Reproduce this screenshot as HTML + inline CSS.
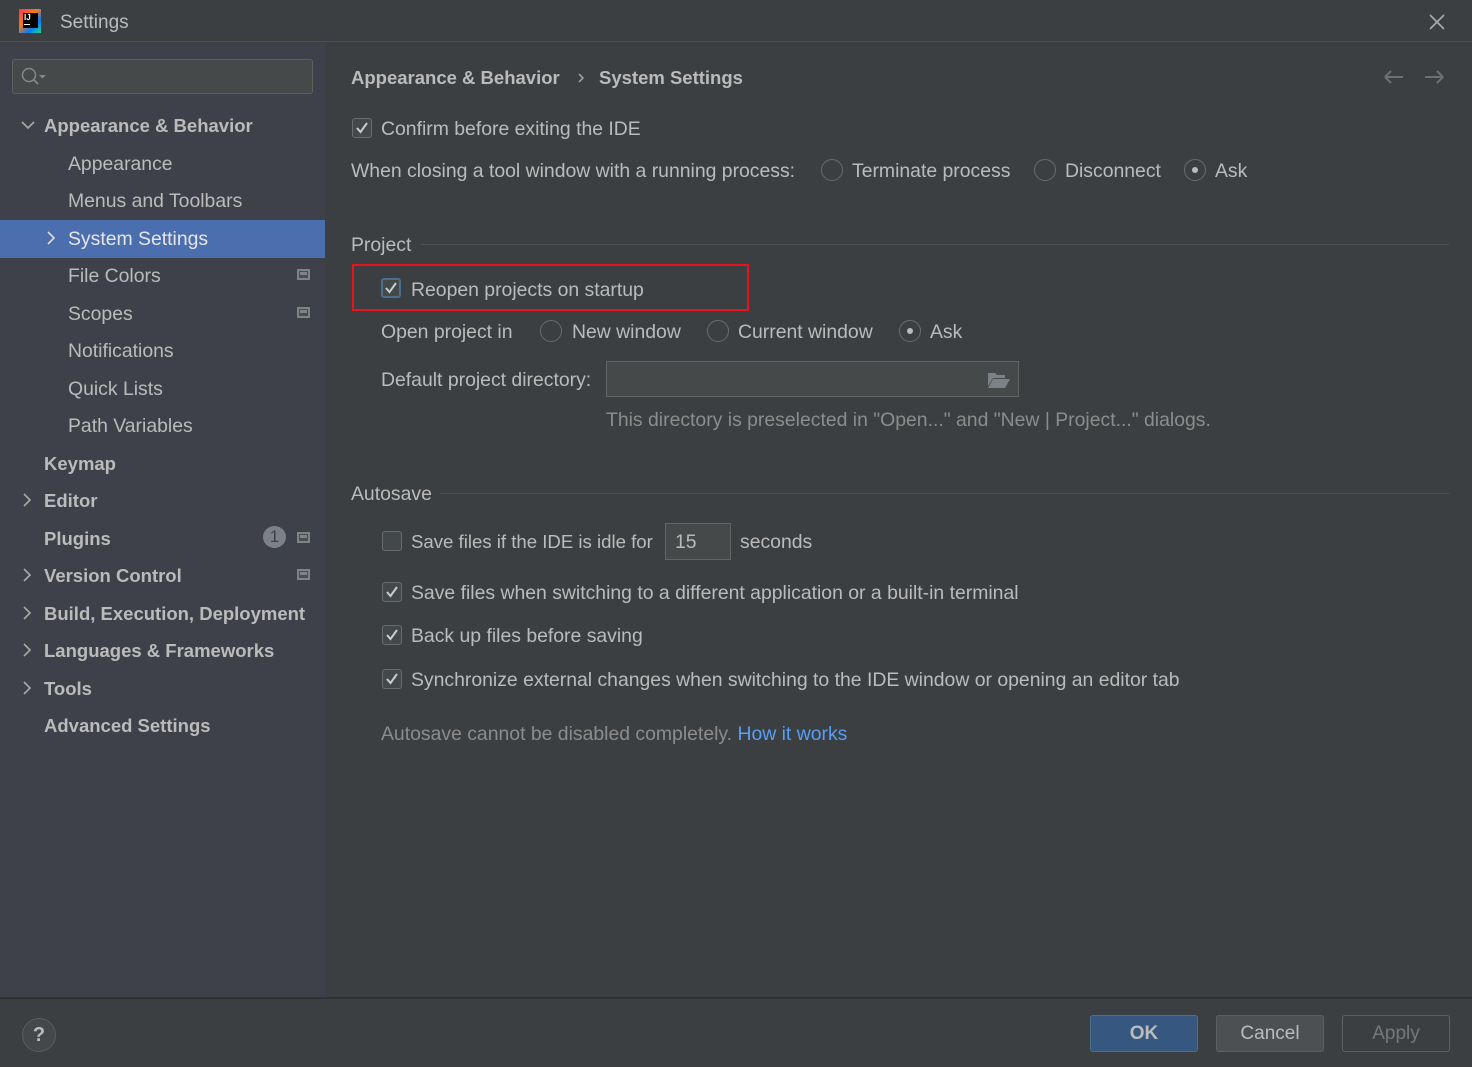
<!DOCTYPE html>
<html><head><meta charset="utf-8"><style>
*{margin:0;padding:0;box-sizing:border-box}
body{width:1472px;height:1067px;background:#3c3f41;font-family:"Liberation Sans","Noto Sans CJK SC",sans-serif;color:#bbbbbb;font-size:19.4px;position:relative;overflow:hidden}
.a{position:absolute;white-space:nowrap;line-height:22px;margin-top:1px}
.b{font-weight:bold;font-size:18.5px}
.cb{position:absolute;width:20px;height:20px;border:1px solid #6b6b6b;background:#43494a;border-radius:3px}
.cb svg{position:absolute;left:2px;top:2px}
.rb{position:absolute;width:22px;height:22px;border:1px solid #6b6b6b;background:#3c3f41;border-radius:50%}
.rb.on::after{content:"";position:absolute;left:7px;top:7px;width:6px;height:6px;border-radius:50%;background:#bbb}
.ico{position:absolute;width:13px;height:11px;border:2px solid #7d8387;background:#4a4e52}
.ico::after{content:"";position:absolute;left:1px;top:1px;width:7px;height:3px;background:#7d8387}
.line{position:absolute;height:1px;background:#515151}
.btn{position:absolute;top:1015px;width:108px;height:37px;border-radius:3px;text-align:center;line-height:35px;font-size:19px}
</style></head><body>
<div style="position:absolute;left:0;top:0;width:1472px;height:42px;background:#3c3f41;border-bottom:1px solid #4e5052"></div>
<div style="position:absolute;left:19px;top:9px;width:22px;height:24px;background:linear-gradient(135deg,#fe315d,#f97a12 40%,#087cfa 70%,#21d789)"></div>
<div style="position:absolute;left:23px;top:13px;width:15px;height:15px;background:#000;color:#fff;font-size:8px;font-weight:bold;line-height:9px;padding-left:1px">IJ<div style="width:6px;height:1px;background:#fff;margin-top:2px"></div></div>
<div class="a" style="left:60px;top:11px;font-size:19px">Settings</div>
<svg class="a" style="left:1428px;top:12px" width="18" height="18"><path d="M2 2L16 16M16 2L2 16" stroke="#aaa" stroke-width="1.6"/></svg>

<div style="position:absolute;left:0;top:43px;width:325px;height:954px;background:#3e4149"></div>
<div style="position:absolute;left:12px;top:59px;width:301px;height:35px;border:1px solid #5e6060;border-radius:3px;background:#45494a"></div>
<svg class="a" style="left:20px;top:65px" width="28" height="22"><circle cx="9" cy="9" r="6.5" stroke="#888" stroke-width="1.5" fill="none"/><path d="M13.5 13.5L18 18" stroke="#888" stroke-width="1.8"/><path d="M19 9h7l-3.5 3.5z" fill="#888"/></svg>
<div style="position:absolute;left:0;top:220px;width:325px;height:38px;background:#4b6eaf"></div>

<svg class="a" style="left:20px;top:117px" width="16" height="14"><path d="M2 4l6 6 6-6" stroke="#aaa" stroke-width="1.6" fill="none"/></svg>
<div class="a b" style="left:44px;top:114px">Appearance &amp; Behavior</div>
<div class="a" style="left:68px;top:152px">Appearance</div>
<div class="a" style="left:68px;top:189px">Menus and Toolbars</div>
<svg class="a" style="left:44px;top:229px" width="14" height="16"><path d="M4 2l6 6-6 6" stroke="#ddd" stroke-width="1.6" fill="none"/></svg>
<div class="a" style="left:68px;top:227px;color:#e6e6e6">System Settings</div>
<div class="a" style="left:68px;top:264px">File Colors</div>
<div class="ico" style="left:297px;top:269px"></div>
<div class="a" style="left:68px;top:302px">Scopes</div>
<div class="ico" style="left:297px;top:307px"></div>
<div class="a" style="left:68px;top:339px">Notifications</div>
<div class="a" style="left:68px;top:377px">Quick Lists</div>
<div class="a" style="left:68px;top:414px">Path Variables</div>
<div class="a b" style="left:44px;top:452px">Keymap</div>
<svg class="a" style="left:20px;top:491px" width="14" height="16"><path d="M4 2l6 6-6 6" stroke="#aaa" stroke-width="1.6" fill="none"/></svg>
<div class="a b" style="left:44px;top:489px">Editor</div>
<div class="a b" style="left:44px;top:527px">Plugins</div>
<div style="position:absolute;left:263px;top:526px;width:23px;height:22px;border-radius:50%;background:#7a8288;color:#3e4149;font-size:17px;text-align:center;line-height:22px">1</div>
<div class="ico" style="left:297px;top:532px"></div>
<svg class="a" style="left:20px;top:566px" width="14" height="16"><path d="M4 2l6 6-6 6" stroke="#aaa" stroke-width="1.6" fill="none"/></svg>
<div class="a b" style="left:44px;top:564px">Version Control</div>
<div class="ico" style="left:297px;top:569px"></div>
<svg class="a" style="left:20px;top:604px" width="14" height="16"><path d="M4 2l6 6-6 6" stroke="#aaa" stroke-width="1.6" fill="none"/></svg>
<div class="a b" style="left:44px;top:602px">Build, Execution, Deployment</div>
<svg class="a" style="left:20px;top:641px" width="14" height="16"><path d="M4 2l6 6-6 6" stroke="#aaa" stroke-width="1.6" fill="none"/></svg>
<div class="a b" style="left:44px;top:639px">Languages &amp; Frameworks</div>
<svg class="a" style="left:20px;top:679px" width="14" height="16"><path d="M4 2l6 6-6 6" stroke="#aaa" stroke-width="1.6" fill="none"/></svg>
<div class="a b" style="left:44px;top:677px">Tools</div>
<div class="a b" style="left:44px;top:714px">Advanced Settings</div>

<div class="a b" style="left:351px;top:66px">Appearance &amp; Behavior</div>
<svg class="a" style="left:576px;top:70px" width="10" height="14"><path d="M3 3l4 4-4 4" stroke="#aaa" stroke-width="1.4" fill="none"/></svg>
<div class="a b" style="left:599px;top:66px">System Settings</div>
<svg class="a" style="left:1382px;top:67px" width="64" height="18"><path d="M3 9h18M3 9l6-6M3 9l6 6" stroke="#6c7073" stroke-width="2" fill="none"/><path d="M43 9h18M61 9l-6-6M61 9l-6 6" stroke="#6c7073" stroke-width="2" fill="none"/></svg>

<div class="cb" style="left:352px;top:118px"><svg width="14" height="14"><path d="M2 7l3.5 4L12 2" stroke="#ccc" stroke-width="2" fill="none"/></svg></div>
<div class="a" style="left:381px;top:117px">Confirm before exiting the IDE</div>
<div class="a" style="left:351px;top:159px">When closing a tool window with a running process:</div>
<div class="rb" style="left:821px;top:159px"></div><div class="a" style="left:852px;top:159px">Terminate process</div>
<div class="rb" style="left:1034px;top:159px"></div><div class="a" style="left:1065px;top:159px">Disconnect</div>
<div class="rb on" style="left:1184px;top:159px"></div><div class="a" style="left:1215px;top:159px">Ask</div>

<div class="a" style="left:351px;top:233px">Project</div>
<div class="line" style="left:421px;top:244px;width:1028px"></div>
<div style="position:absolute;left:352px;top:264px;width:397px;height:47px;border:2px solid #e8141c"></div>
<div class="cb" style="left:381px;top:278px;border:2px solid #4c708c;background:#43494a"><svg width="14" height="14" style="left:1px;top:1px"><path d="M2 7l3.5 4L12 2" stroke="#ccc" stroke-width="2" fill="none"/></svg></div>
<div class="a" style="left:411px;top:278px">Reopen projects on startup</div>
<div class="a" style="left:381px;top:320px">Open project in</div>
<div class="rb" style="left:540px;top:320px"></div><div class="a" style="left:572px;top:320px">New window</div>
<div class="rb" style="left:707px;top:320px"></div><div class="a" style="left:738px;top:320px">Current window</div>
<div class="rb on" style="left:899px;top:320px"></div><div class="a" style="left:930px;top:320px">Ask</div>
<div class="a" style="left:381px;top:368px">Default project directory:</div>
<div style="position:absolute;left:606px;top:361px;width:413px;height:36px;border:1px solid #646464;background:#45494a"></div>
<svg class="a" style="left:987px;top:370px" width="24" height="18"><path d="M1 2h7l2 2h8v3H6L1 15z" fill="#7b8287"/><path d="M6 8h17l-5 9H1z" fill="#7b8287"/></svg>
<div class="a" style="left:606px;top:408px;color:#8c8c8c">This directory is preselected in "Open..." and "New | Project..." dialogs.</div>

<div class="a" style="left:351px;top:482px">Autosave</div>
<div class="line" style="left:440px;top:493px;width:1009px"></div>
<div class="cb" style="left:382px;top:531px"></div>
<div class="a" style="left:411px;top:530px;font-size:18.6px">Save files if the IDE is idle for</div>
<div style="position:absolute;left:665px;top:523px;width:66px;height:37px;border:1px solid #646464;background:#45494a"></div>
<div class="a" style="left:675px;top:530px">15</div>
<div class="a" style="left:740px;top:530px">seconds</div>
<div class="cb" style="left:382px;top:582px"><svg width="14" height="14"><path d="M2 7l3.5 4L12 2" stroke="#ccc" stroke-width="2" fill="none"/></svg></div>
<div class="a" style="left:411px;top:581px">Save files when switching to a different application or a built-in terminal</div>
<div class="cb" style="left:382px;top:625px"><svg width="14" height="14"><path d="M2 7l3.5 4L12 2" stroke="#ccc" stroke-width="2" fill="none"/></svg></div>
<div class="a" style="left:411px;top:624px">Back up files before saving</div>
<div class="cb" style="left:382px;top:669px"><svg width="14" height="14"><path d="M2 7l3.5 4L12 2" stroke="#ccc" stroke-width="2" fill="none"/></svg></div>
<div class="a" style="left:411px;top:668px">Synchronize external changes when switching to the IDE window or opening an editor tab</div>
<div class="a" style="left:381px;top:722px;color:#8c8c8c">Autosave cannot be disabled completely. <span style="color:#589df6">How it works</span></div>

<div style="position:absolute;left:0;top:997px;width:1472px;height:2px;background:#2f3133"></div>
<div style="position:absolute;left:22px;top:1018px;width:34px;height:34px;border-radius:50%;border:1px solid #5a5d60;background:#45484a;color:#bbb;font-weight:bold;font-size:20px;text-align:center;line-height:32px">?</div>
<div class="btn" style="left:1090px;background:#365880;border:1px solid #4c708c;color:#bbb;font-weight:bold">OK</div>
<div class="btn" style="left:1216px;background:#4c5052;border:1px solid #5e6060">Cancel</div>
<div class="btn" style="left:1342px;background:#3c3f41;border:1px solid #5e6060;color:#777">Apply</div>
</body></html>
